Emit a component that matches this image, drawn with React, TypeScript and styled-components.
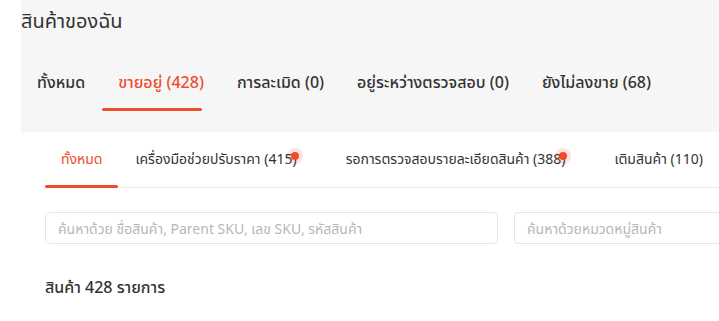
import React from "react";
import styled, { createGlobalStyle } from "styled-components";

const Global = createGlobalStyle`
  html, body { margin: 0; padding: 0; background: #ffffff; }
  body {
    font-family: "Noto Sans", "Noto Sans Thai", "Leelawadee UI", Tahoma, sans-serif;
    color: #333333;
    overflow: hidden;
  }
  * { box-sizing: border-box; }
`;

const Page = styled.div`
  display: flex;
  width: 719px;
  height: 321px;
  overflow: hidden;
`;

const Sidebar = styled.div`
  width: 21px;
  flex: none;
  background: #ffffff;
`;

const Main = styled.main`
  flex: 1;
  background: #f6f6f6;
  display: flex;
  flex-direction: column;
  min-width: 0;
`;

const Title = styled.h1`
  margin: 0;
  padding: 7px 0 0 0;
  height: 55px;
  font-size: 20px;
  font-weight: 400;
  line-height: 28px;
  color: #333333;
`;

const TopTabs = styled.nav`
  display: flex;
  height: 56px;
`;

const TopTab = styled.div<{ $active?: boolean }>`
  position: relative;
  padding: 0 16px;
  margin-right: 1px;
  display: flex;
  align-items: center;
  height: 56px;
  font-size: 16px;
  font-weight: 500;
  white-space: nowrap;
  color: ${(p) => (p.$active ? "#ee4d2d" : "#333333")};
  &::after {
    content: "";
    display: ${(p) => (p.$active ? "block" : "none")};
    position: absolute;
    left: 0;
    width: 100px;
    bottom: 0;
    height: 3px;
    border-radius: 2px;
    background: #ee4d2d;
  }
`;

const Card = styled.section`
  margin-top: 21px;
  flex: 1;
  background: #ffffff;
  border-radius: 4px 0 0 0;
  padding: 0 0 0 24px;
  min-width: 0;
`;

const SubTabs = styled.div`
  display: flex;
  height: 56px;
  border-bottom: 1px solid #e8e8e8;
`;

const SubTab = styled.div<{ $active?: boolean; $badge?: boolean }>`
  position: relative;
  display: flex;
  align-items: center;
  padding: 0 ${(p) => (p.$badge ? "32px" : "16px")} 0 16px;
  margin-right: 1px;
  font-size: 14px;
  white-space: nowrap;
  color: ${(p) => (p.$active ? "#ee4d2d" : "#333333")};
  &::after {
    content: "";
    display: ${(p) => (p.$active ? "block" : "none")};
    position: absolute;
    left: 0;
    right: 0;
    bottom: -1px;
    height: 3px;
    border-radius: 2px;
    background: #ee4d2d;
  }
`;

const Label = styled.span`
  position: relative;
`;

const Dot = styled.span`
  position: absolute;
  right: -2px;
  top: 3px;
  width: 8px;
  height: 8px;
  border-radius: 50%;
  background: #ee4d2d;
  box-shadow: 0 0 0 4px rgba(238, 77, 45, 0.15);
`;

const SearchRow = styled.div`
  display: flex;
  gap: 16px;
  padding-top: 24px;
`;

const Search = styled.input<{ $w: number }>`
  width: ${(p) => p.$w}px;
  flex: none;
  height: 32px;
  border: 1px solid #e5e5e5;
  border-radius: 4px;
  padding: 0 12px;
  font-family: inherit;
  font-size: 14px;
  color: #333333;
  outline: none;
  &::placeholder { color: #b7b7b7; }
`;

const Count = styled.div`
  margin-top: 32px;
  font-size: 16px;
  font-weight: 500;
  color: #333333;
`;

export default function App() {
  return (
    <>
      <Global />
      <Page>
        <Sidebar />
        <Main>
          <Title>สินค้าของฉัน</Title>
          <TopTabs>
            <TopTab>ทั้งหมด</TopTab>
            <TopTab $active>ขายอยู่ (428)</TopTab>
            <TopTab>การละเมิด (0)</TopTab>
            <TopTab>อยู่ระหว่างตรวจสอบ (0)</TopTab>
            <TopTab>ยังไม่ลงขาย (68)</TopTab>
          </TopTabs>
          <Card>
            <SubTabs>
              <SubTab $active>ทั้งหมด</SubTab>
              <SubTab $badge>
                <Label>
                  เครื่องมือช่วยปรับราคา (415)
                  <Dot />
                </Label>
              </SubTab>
              <SubTab $badge>
                <Label>
                  รอการตรวจสอบรายละเอียดสินค้า (388)
                  <Dot />
                </Label>
              </SubTab>
              <SubTab>เติมสินค้า (110)</SubTab>
            </SubTabs>
            <SearchRow>
              <Search $w={453} placeholder="ค้นหาด้วย ชื่อสินค้า, Parent SKU, เลข SKU, รหัสสินค้า" />
              <Search $w={260} placeholder="ค้นหาด้วยหมวดหมู่สินค้า" />
            </SearchRow>
            <Count>สินค้า 428 รายการ</Count>
          </Card>
        </Main>
      </Page>
    </>
  );
}
